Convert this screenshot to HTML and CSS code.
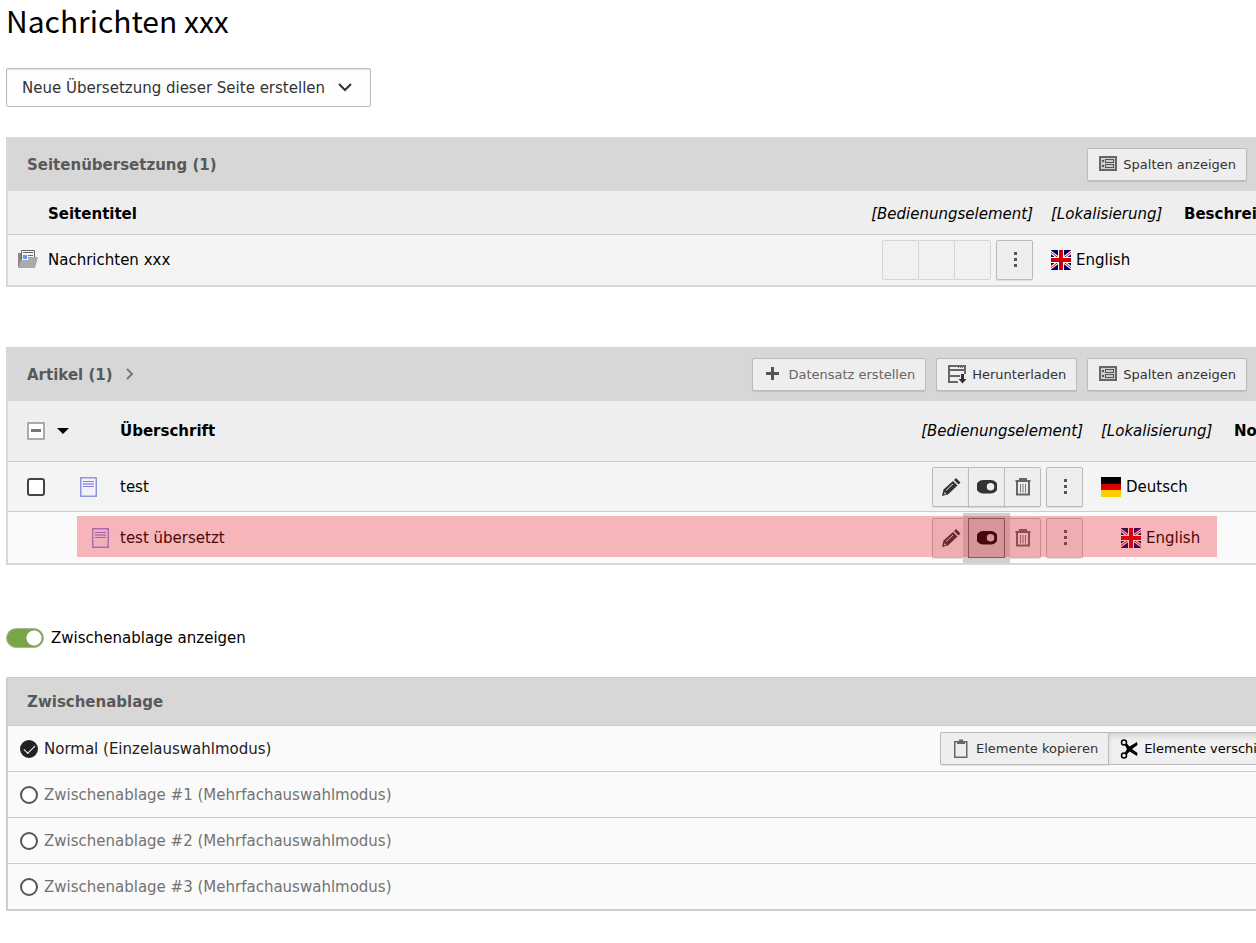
FILE: index.html
```html
<!DOCTYPE html>
<html lang="de">
<head>
    <meta charset="UTF-8">
    <meta name="viewport" content="width=device-width, initial-scale=1.0">
    <title>Nachrichten xxx</title>
    <link rel="stylesheet" href="styles.css">
</head>
<body>

    <!-- Shared icons -->
    <svg class="sprite" aria-hidden="true">
        <symbol id="icon-columns" viewBox="0 0 20 20">
            <path fill="#666" d="M1 2h18v15H1z"/>
            <path fill="#ccc" d="M3 4h14v11H3z"/>
            <path fill="#555" d="M4 6h2v2H4zM4 11h2v2H4zM7 5h9v4H7zM7 10h9v4H7z"/>
            <path fill="#ccc" d="M8 6h7v2H8zM8 11h7v2H8z"/>
        </symbol>
        <symbol id="icon-plus" viewBox="0 0 20 20">
            <path fill="#555" d="M8 3h3v5h5v3h-5v5H8v-5H3V8h5z"/>
        </symbol>
        <symbol id="icon-download" viewBox="0 0 20 20">
            <path fill="#666" d="M1 1h18v9h-2V7H3v4h10v2H3v4h8v2H1zM3 3v2h14V3z"/>
            <path fill="#666" d="M11 3h1v1h-1zM13 3h1v1h-1zM15 3h1v1h-1z"/>
            <path fill="#333" d="M14 10h3v5h2.500L15.500 19.500 11.500 15H14z"/>
        </symbol>
        <symbol id="icon-edit" viewBox="0 0 20 20">
            <path fill="currentColor" d="M1 19l1.500-6.500L12 4l4.500 4.500L7 17.500z"/>
            <path fill="currentColor" d="M13 3l2-2 4.500 4.500-2 2z"/>
            <path fill="#e5e5e5" d="M3 15l2.500 2-2 .5z"/>
            <path fill="none" stroke="#ddd" stroke-width="1" d="M5 13.500l7-6.500"/>
        </symbol>
        <symbol id="icon-toggle" viewBox="0 0 20 20">
            <path fill="currentColor" fill-rule="evenodd" d="M6 3h8a6.500 6.500 0 0 1 0 13.500H6A6.500 6.500 0 0 1 6 3zm7.500 3a3.700 3.700 0 1 0 0 7.500 3.700 3.700 0 0 0 0-7.500z"/>
        </symbol>
        <symbol id="icon-trash" viewBox="0 0 20 20">
            <path fill="none" stroke="#666" stroke-width="2" d="M4 5v12.500h12V5"/>
            <path fill="none" stroke="#666" stroke-width="2" d="M2.500 4h15M7 3.500V2h6v1.500"/>
            <path fill="none" stroke="#777" d="M7.500 7v8.500M10 7v8.500M12.500 7v8.500"/>
        </symbol>
        <symbol id="icon-dots" viewBox="0 0 20 20">
            <path fill="#555" d="M9 2h3v3H9zM9 8h3v3H9zM9 14h3v3H9z"/>
        </symbol>
        <symbol id="icon-article" viewBox="0 0 20 20">
            <path fill="#f3f3fc" stroke="#8f93e6" stroke-width="1.500" d="M.750.75h15.500v18.500H.750z"/>
            <path fill="none" stroke="#7b7fe0" d="M3 4.500h11M3 9.500h11"/>
            <path fill="#a9abee" d="M3 6h11v2H3z"/>
        </symbol>
        <symbol id="flag-gb" viewBox="0 0 20 20">
            <path fill="#006" d="M0 0h20v20H0z"/>
            <path stroke="#fff" stroke-width="3" d="M-3 0l26 20M23 0L-3 20"/>
            <path stroke="#c00" stroke-width="1" d="M-3 0l26 20M23 0L-3 20"/>
            <path fill="#fff" d="M7 0h6v20H7zM0 7h20v6H0z"/>
            <path fill="#c00" d="M8 0h4v20H8zM0 8h20v4H0z"/>
        </symbol>
        <symbol id="flag-de" viewBox="0 0 20 20">
            <path d="M0 0h20v7H0z"/>
            <path fill="#d00" d="M0 7h20v6H0z"/>
            <path fill="#ffce00" d="M0 13h20v7H0z"/>
        </symbol>
    </svg>

    <main class="module">
        <h1>Nachrichten xxx</h1>

        <div class="select-wrap">
            <select class="language-select" aria-label="Neue Übersetzung dieser Seite erstellen">
                <option>Neue Übersetzung dieser Seite erstellen</option>
            </select>
            <svg class="chevron" viewBox="0 0 14 9" aria-hidden="true"><path fill="none" stroke="#333" stroke-width="2" d="M1 1l6 6 6-6"/></svg>
        </div>

        <!-- Page translations -->
        <section class="recordlist">
            <header class="recordlist-header">
                <h2>Seitenübersetzung (1)</h2>
                <div class="actions">
                    <button type="button" class="btn"><svg class="icon"><use href="#icon-columns"/></svg>Spalten anzeigen</button>
                </div>
            </header>
            <table class="table table-pages">
                <colgroup>
                    <col class="col-page-icon">
                    <col>
                    <col class="col-control">
                    <col class="col-local">
                    <col class="col-description">
                </colgroup>
                <thead>
                    <tr>
                        <th></th>
                        <th>Seitentitel</th>
                        <th class="meta control">[Bedienungselement]</th>
                        <th class="meta">[Lokalisierung]</th>
                        <th>Beschreibung</th>
                    </tr>
                </thead>
                <tbody>
                    <tr>
                        <td>
                            <svg class="icon" viewBox="0 0 20 20" aria-hidden="true">
                                <path fill="#888" d="M0 3h3v14H0z"/>
                                <path fill="#f5f5f5" stroke="#666" d="M3.500.5h13v12h-13z"/>
                                <path fill="#666" d="M5 2h10v1H5zM10 5h5v1h-5zM10 7h5v1h-5z"/>
                                <path fill="#59f" d="M5 5h4v4H5z"/>
                                <path fill="#aaa" d="M0 18l3-8h7l1-3h9l-3 11z"/>
                            </svg>
                        </td>
                        <td>Nachrichten xxx</td>
                        <td class="control">
                            <div class="controls">
                                <div class="btn-group empty"><span></span><span></span><span></span></div>
                                <button type="button" class="btn btn-icon" aria-label="Mehr"><svg class="icon"><use href="#icon-dots"/></svg></button>
                            </div>
                        </td>
                        <td class="local"><div class="lang"><svg class="icon"><use href="#flag-gb"/></svg>English</div></td>
                        <td></td>
                    </tr>
                </tbody>
            </table>
        </section>

        <!-- Articles -->
        <section class="recordlist">
            <header class="recordlist-header">
                <h2>Artikel (1) <svg class="angle" viewBox="0 0 8 12" aria-hidden="true"><path fill="none" stroke="#777" stroke-width="2" d="M1 1l5 5-5 5"/></svg></h2>
                <div class="actions">
                    <button type="button" class="btn btn-muted"><svg class="icon"><use href="#icon-plus"/></svg>Datensatz erstellen</button>
                    <button type="button" class="btn"><svg class="icon"><use href="#icon-download"/></svg>Herunterladen</button>
                    <button type="button" class="btn"><svg class="icon"><use href="#icon-columns"/></svg>Spalten anzeigen</button>
                </div>
            </header>
            <table class="table table-articles">
                <colgroup>
                    <col class="col-check">
                    <col class="col-article-icon">
                    <col>
                    <col class="col-control">
                    <col class="col-local">
                    <col class="col-notes">
                </colgroup>
                <thead>
                    <tr>
                        <th class="check">
                            <button type="button" class="check-toggle" aria-label="Auswahl">
                                <svg class="check-box" viewBox="0 0 18 18"><path fill="#fff" stroke="#aaa" stroke-width="2" d="M1 1h16v16H1z"/><path fill="#777" d="M4 7h10v3H4z"/></svg>
                                <svg class="caret" viewBox="0 0 12 6"><path d="M0 0h12L6 6z"/></svg>
                            </button>
                        </th>
                        <th></th>
                        <th>Überschrift</th>
                        <th class="meta control">[Bedienungselement]</th>
                        <th class="meta">[Lokalisierung]</th>
                        <th>Notizen</th>
                    </tr>
                </thead>
                <tbody>
                    <tr>
                        <td class="check"><input type="checkbox" class="checkbox" aria-label="test"></td>
                        <td><svg class="icon"><use href="#icon-article"/></svg></td>
                        <td>test</td>
                        <td class="control">
                            <div class="controls">
                                <div class="btn-group">
                                    <button type="button" class="btn btn-icon" aria-label="Bearbeiten"><svg class="icon"><use href="#icon-edit"/></svg></button>
                                    <button type="button" class="btn btn-icon" aria-label="Verbergen"><svg class="icon"><use href="#icon-toggle"/></svg></button>
                                    <button type="button" class="btn btn-icon" aria-label="Löschen"><svg class="icon"><use href="#icon-trash"/></svg></button>
                                </div>
                                <button type="button" class="btn btn-icon" aria-label="Mehr"><svg class="icon"><use href="#icon-dots"/></svg></button>
                            </div>
                        </td>
                        <td class="local"><div class="lang"><svg class="icon"><use href="#flag-de"/></svg>Deutsch</div></td>
                        <td></td>
                    </tr>
                    <tr class="translation">
                        <td></td>
                        <td class="indent-icon"><svg class="icon"><use href="#icon-article"/></svg></td>
                        <td>test übersetzt</td>
                        <td class="control">
                            <div class="controls">
                                <div class="btn-group">
                                    <button type="button" class="btn btn-icon" aria-label="Bearbeiten"><svg class="icon"><use href="#icon-edit"/></svg></button>
                                    <button type="button" class="btn btn-icon focused" aria-label="Verbergen"><svg class="icon"><use href="#icon-toggle"/></svg></button>
                                    <button type="button" class="btn btn-icon" aria-label="Löschen"><svg class="icon"><use href="#icon-trash"/></svg></button>
                                </div>
                                <button type="button" class="btn btn-icon" aria-label="Mehr"><svg class="icon"><use href="#icon-dots"/></svg></button>
                            </div>
                        </td>
                        <td class="indent"><div class="lang"><svg class="icon"><use href="#flag-gb"/></svg>English</div></td>
                        <td></td>
                    </tr>
                </tbody>
            </table>
        </section>

        <label class="switch">
            <input type="checkbox" checked>
            Zwischenablage anzeigen
        </label>

        <!-- Clipboard -->
        <section class="clipboard">
            <h2>Zwischenablage</h2>
            <div class="clipboard-row active">
                <label><input type="radio" name="clipboard" checked>Normal (Einzelauswahlmodus)</label>
                <div class="btn-group clipboard-modes">
                    <button type="button" class="btn"><svg class="icon" viewBox="0 0 20 20"><path fill="#eee" stroke="#666" stroke-width="1.500" d="M3.750 2.750h12v15.500h-12z"/><path fill="#666" d="M6 2h2V.5h4V2h2v3H6z"/></svg>Elemente kopieren</button>
                    <button type="button" class="btn pressed"><svg class="icon" viewBox="0 0 20 20"><circle cx="5" cy="3.500" r="2.500" fill="none" stroke="#000" stroke-width="1.500"/><circle cx="5" cy="16.500" r="2.500" fill="none" stroke="#000" stroke-width="1.500"/><path d="M5.500 5.500l2-1.500 3 3.500L18 3l.5 3-5.500 4 5.500 4-.5 3-7.500-4.500-3 3.500-2-1.500L8 10z"/></svg>Elemente verschieben</button>
                </div>
            </div>
            <div class="clipboard-row">
                <label><input type="radio" name="clipboard">Zwischenablage #1 (Mehrfachauswahlmodus)</label>
            </div>
            <div class="clipboard-row">
                <label><input type="radio" name="clipboard">Zwischenablage #2 (Mehrfachauswahlmodus)</label>
            </div>
            <div class="clipboard-row">
                <label><input type="radio" name="clipboard">Zwischenablage #3 (Mehrfachauswahlmodus)</label>
            </div>
        </section>
    </main>

</body>
</html>
```

FILE: styles.css
```css
* {
    box-sizing: border-box;
}

body {
    margin: 0;
    background-color: #fff;
    color: #000;
    font-family: Verdana, "DejaVu Sans", sans-serif;
    font-size: 15px;
    line-height: 20px;
    overflow-x: hidden;
}

.sprite {
    display: none;
}

.module {
    padding-left: 6px;
}

h1 {
    margin: 0 0 28px;
    font-family: "Source Sans Pro", "Noto Sans CJK JP", sans-serif;
    font-size: 30px;
    font-weight: 400;
    line-height: 40px;
}

h2 {
    margin: 0;
    color: #595959;
    font-size: 15px;
    font-weight: bold;
    line-height: 20px;
}

.icon {
    display: block;
    flex: none;
    width: 20px;
    height: 20px;
}

/* Language select */
.select-wrap {
    position: relative;
    width: 365px;
    margin-bottom: 30px;
}

.language-select {
    display: block;
    width: 100%;
    height: 39px;
    padding: 0 15px;
    appearance: none;
    background-color: #fefefe;
    border: 1px solid #bbb;
    border-radius: 2px;
    box-shadow: inset 0 1px 2px rgba(0, 0, 0, 0.1);
    color: #333;
    font: inherit;
}

.chevron {
    position: absolute;
    top: 15px;
    right: 19px;
    width: 14px;
    height: 9px;
}

/* Buttons */
.btn {
    display: flex;
    flex: none;
    align-items: center;
    gap: 5px;
    height: 33px;
    padding: 0 10px;
    background-color: #eee;
    border: 1px solid #bbb;
    border-radius: 2px;
    box-shadow: 0 1px 1px rgba(0, 0, 0, 0.1);
    color: #333;
    font-family: inherit;
    font-size: 13px;
    white-space: nowrap;
}

.btn-muted {
    color: #666;
}

.btn-icon {
    justify-content: center;
    width: 37px;
    height: 40px;
    padding: 0;
}

.btn-group {
    display: flex;
}

.btn-group > * + * {
    margin-left: -1px;
}

.btn-group > :not(:first-child) {
    border-top-left-radius: 0;
    border-bottom-left-radius: 0;
}

.btn-group > :not(:last-child) {
    border-top-right-radius: 0;
    border-bottom-right-radius: 0;
}

.btn-group.empty span {
    width: 37px;
    height: 40px;
    background-color: #f1f1f1;
    border: 1px solid #d5d5d5;
    border-radius: 2px;
}

.focused {
    position: relative;
    background-color: #ccc;
    border-color: #666;
    box-shadow: 0 0 0 5px #cfcfcf;
    color: #000;
}

.pressed {
    background-color: #f0f0f0;
    box-shadow: inset 0 3px 5px rgba(0, 0, 0, 0.12);
    color: #000;
}

/* Record lists */
.recordlist {
    margin-bottom: 60px;
    border: 2px solid #d7d7d7;
    border-width: 0 0 2px 2px;
}

.recordlist-header {
    display: flex;
    align-items: center;
    justify-content: space-between;
    height: 54px;
    padding: 0 9px 0 19px;
    background-color: #d7d7d7;
}

.recordlist-header h2 {
    padding-top: 2px;
}

.actions {
    display: flex;
    gap: 10px;
}

.angle {
    width: 8px;
    height: 12px;
    margin-left: 8px;
}

.table {
    width: 100%;
    border-collapse: separate;
    border-spacing: 0;
    table-layout: fixed;
}

.table th,
.table td {
    padding: 0 10px;
    text-align: left;
    white-space: nowrap;
}

.table th {
    height: 44px;
    background-color: #eee;
    border-bottom: 1px solid #ccc;
    overflow: hidden;
}

.table-pages th {
    padding-top: 2px;
}

.table td {
    height: 50px;
    background-color: #f4f4f4;
}

.table .meta {
    padding-left: 8px;
    padding-right: 8px;
    font-style: italic;
    font-weight: normal;
}

.table .control {
    padding-left: 0;
    padding-right: 10px;
    text-align: right;
}

.table .local {
    padding-left: 8px;
}

.col-page-icon {
    width: 30px;
}

.col-article-icon {
    width: 40px;
}

.col-check {
    width: 62px;
}

.col-control {
    width: 182px;
}

.col-local {
    width: 131px;
}

.col-description {
    width: 82px;
}

.col-notes {
    width: 32px;
}

.table-articles th {
    height: 61px;
}

.table .check {
    padding-left: 19px;
}

.table-articles tr:first-child td {
    border-bottom: 1px solid #ccc;
}

.table .translation td {
    height: 51px;
    background-color: #fafafa;
}

.table .indent-icon {
    padding-left: 22px;
}

.table .indent {
    padding-left: 28px;
}

.controls {
    display: flex;
    justify-content: flex-end;
    gap: 5px;
}

.lang {
    display: flex;
    align-items: center;
    gap: 5px;
}

.translation {
    position: relative;
}

/* Red marker over the translated record */
.translation td:first-child::after {
    content: "";
    position: absolute;
    z-index: 1;
    top: 4px;
    bottom: 6px;
    left: 69px;
    right: 39px;
    background-color: rgba(237, 28, 36, 0.3);
    pointer-events: none;
}

/* Selection boxes */
.check-toggle {
    display: flex;
    align-items: center;
    gap: 12px;
    padding: 0;
    background: none;
    border: 0;
}

.check-box {
    width: 18px;
    height: 18px;
}

.caret {
    width: 12px;
    height: 6px;
}

.checkbox {
    display: block;
    width: 18px;
    height: 18px;
    margin: 0;
    appearance: none;
    background-color: #fff;
    border: 2px solid #444;
    border-radius: 3px;
}

/* Clipboard switch */
.switch {
    display: flex;
    align-items: center;
    gap: 7px;
    min-height: 26px;
    margin-bottom: 26px;
}

.switch input {
    width: 38px;
    height: 20px;
    margin: 0;
    appearance: none;
    background: radial-gradient(circle at 27px 9px, #fff 7px, transparent 8px) #79a548;
    border: 1px solid #a9b99b;
    border-radius: 10px;
}

/* Clipboard */
.clipboard {
    border: 1px solid #ccc;
    border-width: 1px 0 2px 2px;
    border-radius: 2px 0 0 2px;
    box-shadow: 0 2px 2px rgba(0, 0, 0, 0.1);
}

.clipboard h2 {
    padding: 14px 19px 13px;
    background-color: #d7d7d7;
}

.clipboard-row {
    display: flex;
    align-items: center;
    justify-content: space-between;
    height: 46px;
    padding-left: 12px;
    background-color: #fafafa;
    border-top: 1px solid #ccc;
    color: #737373;
}

.clipboard-row.active {
    color: #222;
}

.clipboard-row label {
    display: flex;
    align-items: center;
    gap: 6px;
}

.clipboard-row input {
    width: 18px;
    height: 18px;
    margin: 0;
    appearance: none;
    background-color: #fff;
    border: 2px solid #555;
    border-radius: 50%;
}

.clipboard-row input:checked {
    position: relative;
    background-color: #222;
    border-color: #222;
}

.clipboard-row input:checked::after {
    content: "";
    position: absolute;
    top: 3px;
    left: 2px;
    width: 10px;
    height: 5px;
    border: 1px solid #fff;
    border-width: 0 0 1px 1px;
    transform: rotate(-45deg);
}

.clipboard-modes {
    width: 316px;
}
```
